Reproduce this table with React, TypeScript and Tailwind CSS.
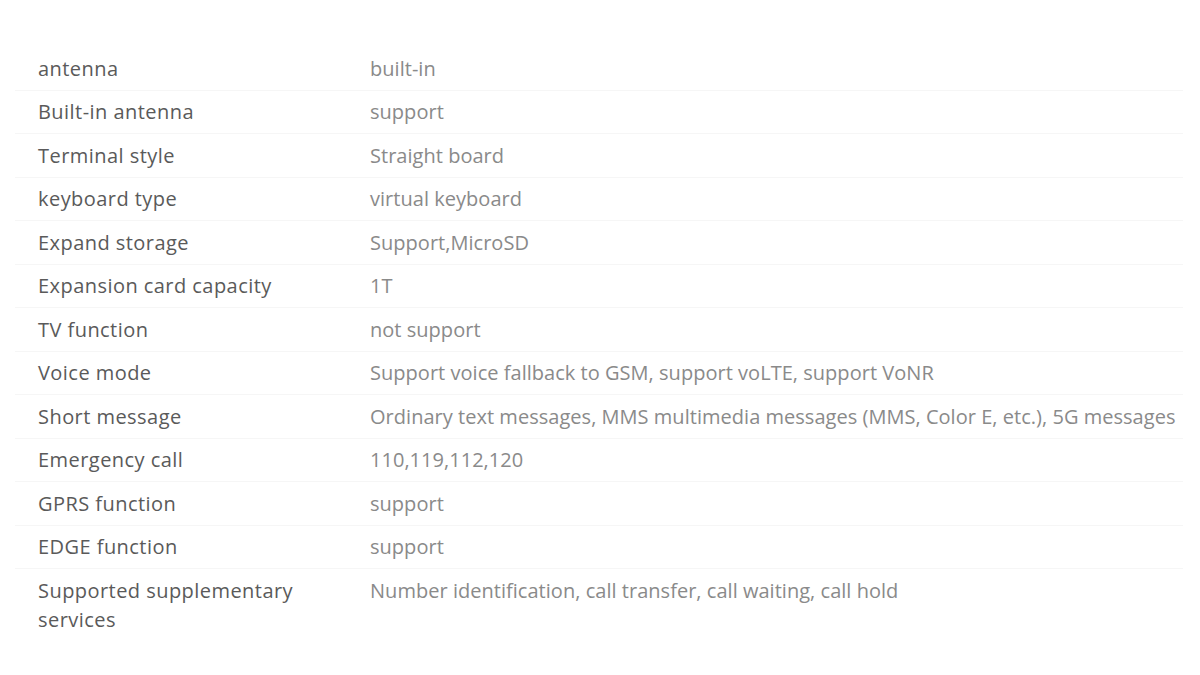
const specs: [string, string][] = [
  ['antenna', 'built-in'],
  ['Built-in antenna', 'support'],
  ['Terminal style', 'Straight board'],
  ['keyboard type', 'virtual keyboard'],
  ['Expand storage', 'Support,MicroSD'],
  ['Expansion card capacity', '1T'],
  ['TV function', 'not support'],
  ['Voice mode', 'Support voice fallback to GSM, support voLTE, support VoNR'],
  ['Short message', 'Ordinary text messages, MMS multimedia messages (MMS, Color E, etc.), 5G messages'],
  ['Emergency call', '110,119,112,120'],
  ['GPRS function', 'support'],
  ['EDGE function', 'support'],
  ['Supported supplementary services', 'Number identification, call transfer, call waiting, call hold'],
]

export default function App() {
  return (
    <div className="w-[1200px] h-[675px] bg-white pt-[47px] pl-[15px] font-['Open_Sans',sans-serif] text-[20px]">
      <table className="w-[1168px] table-fixed border-collapse">
        <tbody>
          {specs.map(([label, value], i) => (
            <tr key={label} className={i < specs.length - 1 ? 'border-b border-[#f6f6f6]' : ''}>
              <td className="w-[355px] pl-[23px] pr-[30px] py-[6.5px] leading-[29.5px] align-top font-medium tracking-[0.45px] text-[#5a5a5a]">{label}</td>
              <td className="py-[6.5px] leading-[29.5px] align-top text-[#8a8a8a] tracking-[0.03px] whitespace-nowrap">{value}</td>
            </tr>
          ))}
        </tbody>
      </table>
    </div>
  )
}
